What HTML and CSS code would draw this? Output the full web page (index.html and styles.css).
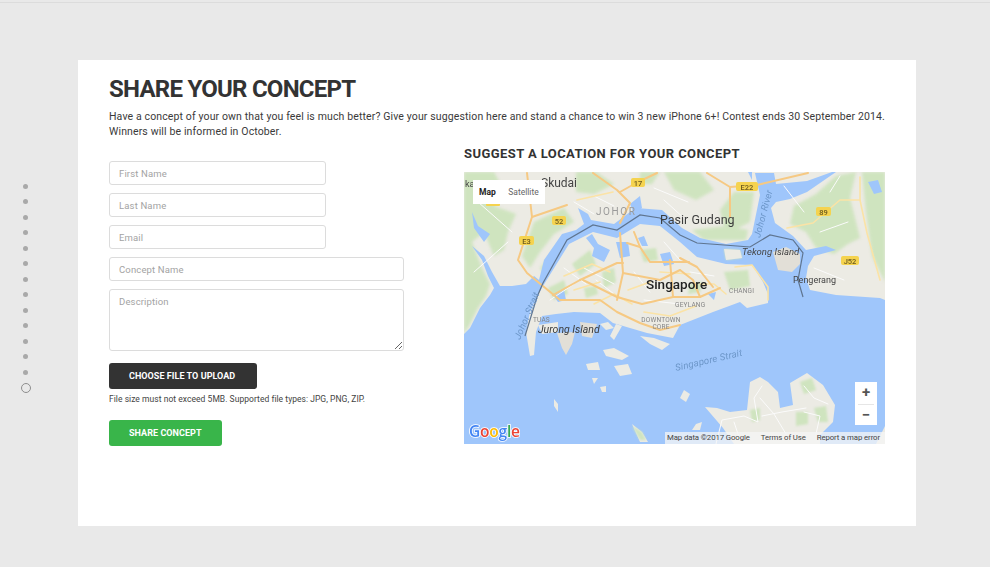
FILE: index.html
```html
<!DOCTYPE html>
<html lang="en">
<head>
<meta charset="utf-8">
<title>Share your concept</title>
<link rel="stylesheet" href="styles.css">
</head>
<body>
<div class="topline"></div>
<nav class="dots">
  <i></i><i></i><i></i><i></i><i></i><i></i><i></i><i></i><i></i><i></i><i></i><i></i><i></i><b></b>
</nav>
<main class="card">
  <h1>SHARE YOUR CONCEPT</h1>
  <p class="intro">Have a concept of your own that you feel is much better? Give your suggestion here and stand a chance to win 3 new iPhone 6+! Contest ends 30 September 2014. Winners will be informed in October.</p>
  <div class="cols">
    <form class="form">
      <input class="field short" placeholder="First Name">
      <input class="field short" placeholder="Last Name">
      <input class="field short" placeholder="Email">
      <input class="field" placeholder="Concept Name">
      <textarea class="field area" placeholder="Description"></textarea>
      <button type="button" class="btn dark">CHOOSE FILE TO UPLOAD</button>
      <p class="note">File size must not exceed 5MB. Supported file types: JPG, PNG, ZIP.</p>
      <button type="button" class="btn go">SHARE CONCEPT</button>
    </form>
    <section class="loc">
      <h2>SUGGEST A LOCATION FOR YOUR CONCEPT</h2>
      <div class="map">
        <svg class="mapsvg" viewBox="0 0 421 272" width="421" height="272">
          <rect class="land" width="421" height="272"/>
          <g class="greens">
            <path d="M0 0H30L42 22 30 34 52 42 44 60 40 78 30 84 20 60 8 70 18 96 26 112 22 124 14 136 6 152 0 162Z"/>
            <path d="M70 50L100 36 110 50 90 62 76 80 66 96 58 84Z"/>
            <path d="M76 96L94 74 100 92 84 108Z"/>
            <path d="M200 0H236L250 18 232 28 210 18Z"/>
            <path d="M270 20H290L286 50 262 62 256 38Z"/>
            <path d="M330 34L352 22 372 4 392 0 386 26 396 66 384 72 370 82 352 76 342 60 326 52Z"/>
            <path d="M398 0H421V110L408 84 402 40Z"/>
            <path d="M228 58L262 54 284 58 282 68 240 68Z"/>
            <path d="M112 0H132L150 12 130 22 112 20Z"/>
            <path d="M176 0H196L188 12 176 12Z"/>
          </g>
          <path class="water" d="M0 162L6 156 16 136 26 123 30 116 24 104 18 88 8 74 20 84 28 100 36 114 48 114 62 112 70 104 75 108 80 88 98 62 112 58 120 52 114 36 124 42 127 48 150 52 166 40 172 36 198 38 218 56 236 66 262 72 284 68 288 62 296 23 291 1H310L312 12 343 9 368 0H372L343 20 326 27 312 30 307 36 311 51 329 64 342 78 362 74 372 78 350 84 344 94 342 106 346 118 372 123 416 126 421 128V272H0Z"/>
          <path class="water" d="M8 40L14 54 26 62 20 70 10 56ZM166 32L176 24 178 36 170 42ZM284 0L288 0 288 8ZM404 10L414 8 418 20 410 22Z"/>
          <path class="land" d="M73 125L79 114 105 72 129 60 153 66 176 52 196 54 216 70 233 85 262 92 288 93 299 110 304 122 304 131 283 136 276 130 249 140 216 153 209 166 183 161 149 151 136 141 110 140 92 142 78 144 72 160 70 183 66 184 62 160 66 140Z"/>
          <g class="greens soft">
            <path d="M108 92L126 78 132 92 116 104ZM84 116L100 108 104 122 90 128ZM138 100L150 96 152 110 140 116ZM176 78L192 76 194 88 180 90ZM120 116L132 114 134 122 122 126ZM226 112L238 110 236 120 224 122ZM260 100L284 98 286 114 266 118Z"/>
            <path d="M260 77L276 78 278 86 262 88Z"/>
          </g>
          <path class="water" d="M122 66L128 62 134 72 146 78 140 90 128 84 130 76ZM152 70L164 70 166 84 156 86ZM196 82L206 80 210 92 200 94ZM174 66L180 64 184 74 178 74ZM90 124L100 118 102 128 94 130ZM244 122L252 120 250 128Z"/>
          <path class="land" d="M260 77L276 78 278 86 262 88Z"/>
          <path class="tek" d="M309 80L322 75 336 82 336 92 328 100 314 98Z"/>
          <path class="tek" d="M93 161L111 160 108 172 102 183 98 176ZM116 150L133 152 128 166 118 164Z"/>
          <path class="land" d="M74 153L94 150 94 160 78 162ZM136 152L144 150 150 156 142 158ZM152 152L158 154 150 168 146 164ZM176 164L190 166 206 172 198 178 186 172Z"/>
          <path class="land" d="M139 178L150 176 165 184 158 188 142 184ZM122 192L134 190 136 198 124 198ZM150 194L164 192 168 202 156 204ZM128 206L134 206 130 212ZM136 215L142 214 142 220 138 220ZM90 227L94 232 94 240 90 234ZM168 252L178 260 184 270 176 270ZM220 218L226 222 222 230 216 226ZM232 252L238 250 236 258 228 258Z"/>
          <path class="land" d="M241 235L253 236 266 240 283 238 286 210 296 205 304 210 314 220 316 236 329 233 326 211 343 201 359 213 371 233 369 250 356 263 356 272H270L259 256Z"/>
          <g class="greens soft">
            <path d="M336 210L348 206 352 218 340 222ZM350 236L362 234 364 250 354 250ZM286 238L296 236 296 248 288 250ZM332 240L344 240 344 252 332 254Z"/>
            <path d="M168 254L178 260 182 268 176 268Z"/>
          </g>
          <path class="land" d="M412 272L421 254V272Z"/>
          <g class="road white">
            <path d="M252 272L258 248 280 244 294 250 290 226 298 214M296 226L310 242 322 262M340 240L356 244 352 262M298 244L318 240 342 236M340 214L350 226 364 232M270 250L276 268"/>
            <path d="M14 30L48 60M70 22L90 8M10 100L44 70M320 14L340 40M356 60L384 50M350 96L380 108M366 20L376 4M110 30L130 42M190 16L224 30M200 28L222 48M100 96L122 112M130 24L150 34"/>
            <path d="M86 128L110 112M120 96L150 112M170 100L186 120M226 100L250 104M180 128L216 132M200 70L216 88M132 108L150 122"/>
          </g>
          <g class="road pale">
            <path d="M323 56L349 51 376 28 396 28 396 5"/>
            <path d="M396 28L403 61 416 108"/>
            <path d="M271 95L288 93 304 115 304 128"/>
            <path d="M113 28L149 20"/>
            <path d="M100 104L128 92 146 100M130 132L150 122 168 132M196 100L226 102M180 140L206 144 232 134M110 118L136 110M236 112L250 112 262 122M164 118L186 110"/>
          </g>
          <g class="road">
            <path d="M63 1L68 45 54 88 63 101 96 128 136 128 153 140 176 151 196 158 216 153"/>
            <path d="M68 45L103 33"/>
            <path d="M129 1L153 18 166 31 156 51"/>
            <path d="M156 20L172 11 193 1"/>
            <path d="M243 1L266 15 293 13 344 1"/>
            <path d="M266 15V45"/>
            <path d="M156 61L159 101 153 128"/>
            <path d="M163 71L176 75 186 90 209 90 225 90"/>
            <path d="M116 108L153 91 159 91"/>
            <path d="M119 108L153 125"/>
            <path d="M206 88L209 125"/>
            <path d="M216 86L233 95 249 115"/>
            <path d="M216 98L229 108 236 125"/>
            <path d="M159 101L196 108 216 98"/>
            <path d="M153 125L178 132 209 125 236 125 256 116"/>
            <path d="M89 123L116 108"/>
            <path d="M176 75L170 60"/>
          </g>
          <path class="border" d="M61 164L73 125 79 111 103 68 129 53 153 58 176 43 196 46 216 63 233 71 260 73 286 75 306 63 329 68 339 81 334 108 339 125"/>
          <g class="shield">
            <rect x="167" y="6" width="14" height="9" rx="2"/>
            <rect x="272" y="10" width="22" height="9" rx="2"/>
            <rect x="88" y="44" width="14" height="9" rx="2"/>
            <rect x="55" y="64" width="15" height="9" rx="2"/>
            <rect x="352" y="35" width="15" height="9" rx="2"/>
            <rect x="377" y="84" width="18" height="9" rx="2"/>
            <rect x="22" y="30" width="14" height="4" rx="1"/>
          </g>
          <g class="shieldtext">
            <text x="174" y="13.500">17</text>
            <text x="283" y="17.500">E22</text>
            <text x="95" y="51.500">52</text>
            <text x="62.500" y="71.500">E3</text>
            <text x="359.500" y="42.500">89</text>
            <text x="386" y="91.500">J52</text>
          </g>
          <text class="lbl skudai" x="77" y="15">Skudai</text>
          <text class="lbl ka" x="1" y="15">ka</text>
          <text class="lbl johor" x="132" y="43">JOHOR</text>
          <text class="lbl pasir" x="196" y="52">Pasir Gudang</text>
          <text class="lbl sing" x="182" y="117">Singapore</text>
          <text class="lbl tekong" x="278" y="83">Tekong Island</text>
          <text class="lbl peng" x="329" y="111">Pengerang</text>
          <text class="lbl small" x="265" y="121">CHANGI</text>
          <text class="lbl small" x="211" y="135">GEYLANG</text>
          <text class="lbl small mid" x="197" y="150">DOWNTOWN</text>
          <text class="lbl small mid" x="197" y="157">CORE</text>
          <text class="lbl small" x="69" y="150">TUAS</text>
          <text class="lbl jurong" x="74" y="161">Jurong Island</text>
          <text class="lbl sea" transform="translate(56 168) rotate(-67)">Johor Strait</text>
          <text class="lbl sea" transform="translate(296 66) rotate(-75)">Johor River</text>
          <text class="lbl sea" transform="translate(212 199) rotate(-13)">Singapore Strait</text>
          <text class="glogo" x="5" y="265"><tspan class="gb">G</tspan><tspan class="gr">o</tspan><tspan class="gy">o</tspan><tspan class="gb">g</tspan><tspan class="gg">l</tspan><tspan class="gr">e</tspan></text>
        </svg>
        <div class="maptype"><span class="on">Map</span><span class="off">Satellite</span></div>
        <div class="zoom"><span class="zbtn">+</span><span class="zbtn sep">−</span></div>
        <div class="attr"><span>Map data ©2017 Google</span><span>Terms of Use</span><span>Report a map error</span></div>
      </div>
    </section>
  </div>
</main>
</body>
</html>
```

FILE: styles.css
```css
* { box-sizing: border-box; }
html, body { margin: 0; height: 100%; }
body {
  background: #e9e9e9;
  color: #333;
  font-family: Roboto, "Liberation Sans", sans-serif;
  overflow: hidden;
  padding-top: 60px;
  position: relative;
}
.topline { position: absolute; left: 0; right: 0; top: 2px; height: 1px; background: #dcdcdc; }
.dots {
  position: absolute; left: 20px; top: 183.5px; width: 11px;
  display: flex; flex-direction: column; align-items: center; gap: 10.5px;
}
.dots i { width: 5px; height: 5px; border-radius: 50%; background: #a9a9a9; }
.dots b { width: 10px; height: 10px; margin-top: -2.500px; border-radius: 50%; border: 1px solid #8e8e8e; }
.card {
  margin-left: 78px; width: 838px; height: 466px;
  background: #fff;
  padding: 15px 31px 0;
}
h1 { margin: 0; font-size: 24px; line-height: 28px; font-weight: 700; letter-spacing: -0.75px; color: #333; }
.intro { margin: 6px 0 0; font-size: 10.5px; line-height: 15px; letter-spacing: 0.13px; color: #3a3a3a; }
.cols { display: flex; margin-top: 7px; }
.form { width: 355px; display: flex; flex-direction: column; align-items: flex-start; padding-top: 15px; }
.field {
  display: block; width: 295px; height: 24px; margin: 0 0 8px;
  border: 1.5px solid #dcdcdc; border-radius: 3px; background: #fff;
  padding: 0 9px; font: 9.5px/14px Roboto, sans-serif; letter-spacing: 0.15px; color: #333;
  outline: none;
}
.field::placeholder { color: #a3a3a3; opacity: 1; }
.short { width: 217px; }
.area { height: 62px; padding-top: 5px; margin-bottom: 12px; }
.btn {
  display: block; height: 26px; border: 0; border-radius: 3px; color: #fff; white-space: nowrap;
  font: 700 9px/26px Roboto, sans-serif; letter-spacing: 0.05px; padding: 0 20px; text-align: left;
}
.dark { background: #333; width: 148px; }
.go { background: #39b54a; width: 113px; }
.note { margin: 5px 0 15px; font-size: 8.5px; line-height: 11px; letter-spacing: 0.04px; color: #444; }
.loc { width: 421px; }
h2 { margin: 0 0 10px; font-size: 13px; line-height: 16px; font-weight: 700; letter-spacing: 0.42px; color: #333; }
.map { position: relative; width: 421px; height: 272px; overflow: hidden; background: #9fc7fb; }
.mapsvg { display: block; filter: blur(0.4px); }
.land { fill: #ecebe4; }
.tek { fill: #e2dfd7; }
.greens { fill: #cfe4bf; filter: blur(1.5px); }
.soft { filter: blur(0.8px); }
.water { fill: #9fc6fb; }
.road { fill: none; stroke: #f6c983; stroke-width: 2; stroke-linejoin: round; stroke-linecap: round; }
.pale { stroke: #fbe3a6; stroke-width: 1.6; }
.white { stroke: #fbfbfb; stroke-width: 1; }
.border { fill: none; stroke: #5f7590; stroke-width: 1.2; }
.shield { fill: #f5d34f; }
.shieldtext { font: 500 7.5px Roboto, sans-serif; fill: #6b5a20; text-anchor: middle; }
.lbl { fill: #444; font-family: Roboto, sans-serif; }
.skudai { font-size: 12px; }
.ka { font-size: 9px; }
.johor { font-size: 10px; letter-spacing: 1.6px; fill: #9a9a9a; }
.pasir { font-size: 12.5px; fill: #3d3d3d; }
.sing { font-size: 13.5px; font-weight: 500; fill: #222; }
.tekong { font-size: 9.5px; font-style: italic; }
.peng { font-size: 9px; }
.small { font-size: 6.5px; fill: #858585; letter-spacing: 0.2px; }
.mid { text-anchor: middle; }
.jurong { font-size: 10.5px; font-style: italic; fill: #3c3c3c; }
.sea { font-size: 9.5px; font-style: italic; fill: #6c96c8; letter-spacing: 0.2px; }
.glogo { font: 600 15.5px "Open Sans", sans-serif; letter-spacing: -0.2px; stroke: #fff; stroke-width: 1.6; paint-order: stroke; }
.gb { fill: #4285f4; } .gr { fill: #ea4335; } .gy { fill: #fbbc05; } .gg { fill: #34a853; }
.maptype {
  position: absolute; left: 9px; top: 8px; width: 72px; height: 24px;
  display: flex; background: #fff; font-size: 8.5px; line-height: 24px;
}
.maptype span { text-align: center; }
.on { width: 29px; font-weight: 700; color: #222; }
.off { flex: 1; color: #666; }
.zoom {
  position: absolute; left: 391px; top: 210px; width: 22px; height: 43px;
  background: #fff; display: flex; flex-direction: column; padding: 0 3px;
}
.zbtn { height: 21.5px; text-align: center; font: 700 15px/21px Roboto, sans-serif; color: #555; }
.sep { border-top: 1px solid #e6e6e6; }
.attr {
  position: absolute; right: 0; bottom: 0; width: 220px; height: 12px; padding: 0 5px 0 2px;
  display: flex; justify-content: space-between; background: rgba(245,245,245,.75);
  font-size: 7.8px; letter-spacing: -0.1px; line-height: 12px; color: #444;
}
```
